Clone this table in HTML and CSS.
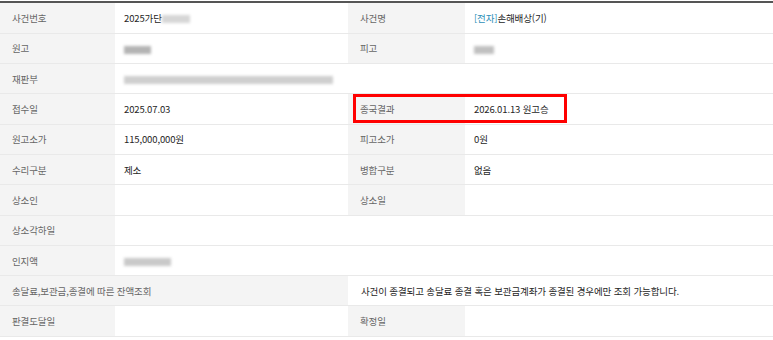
FILE: index.html
```html
<!DOCTYPE html>
<html lang="ko">
<head>
<meta charset="utf-8">
<link rel="stylesheet" href="styles.css">
</head>
<body>
<div class="wrap">
  <table class="info">
    <colgroup>
      <col class="c1"><col class="c2"><col class="c3"><col class="c4">
    </colgroup>
    <tr>
      <th>사건번호</th>
      <td>2025가단<span class="blur b-num"></span></td>
      <th>사건명</th>
      <td><span class="tag">[전자]</span>손해배상(기)</td>
    </tr>
    <tr>
      <th>원고</th>
      <td><span class="blur b-plain"></span></td>
      <th>피고</th>
      <td><span class="blur b-def"></span></td>
    </tr>
    <tr>
      <th>재판부</th>
      <td colspan="3"><span class="blur b-court"></span></td>
    </tr>
    <tr>
      <th>접수일</th>
      <td>2025.07.03</td>
      <th>종국결과</th>
      <td>2026.01.13 원고승</td>
    </tr>
    <tr>
      <th>원고소가</th>
      <td>115,000,000원</td>
      <th>피고소가</th>
      <td>0원</td>
    </tr>
    <tr>
      <th>수리구분</th>
      <td>제소</td>
      <th>병합구분</th>
      <td>없음</td>
    </tr>
    <tr>
      <th>상소인</th>
      <td></td>
      <th>상소일</th>
      <td></td>
    </tr>
    <tr>
      <th>상소각하일</th>
      <td colspan="3"></td>
    </tr>
    <tr>
      <th>인지액</th>
      <td colspan="3"><span class="blur b-fee"></span></td>
    </tr>
    <tr>
      <th colspan="2">송달료,보관금,종결에 따른 잔액조회</th>
      <td colspan="2" class="note">사건이 종결되고 송달료 종결 혹은 보관금계좌가 종결된 경우에만 조회 가능합니다.</td>
    </tr>
    <tr>
      <th>판결도달일</th>
      <td></td>
      <th>확정일</th>
      <td></td>
    </tr>
  </table>
  <div class="highlight"></div>
</div>
</body>
</html>
```

FILE: styles.css
```css
html, body {
  margin: 0;
  padding: 0;
  background: #fff;
}
body {
  font-family: "Noto Sans CJK KR", "Noto Sans", sans-serif;
  font-size: 9.5px;
  letter-spacing: -0.13px;
}
.wrap {
  position: relative;
  margin-top: 1px;
  border-top: 2px solid #555;
}
.info {
  width: 100%;
  border-collapse: collapse;
  table-layout: fixed;
}
.c1 { width: 115px; }
.c2 { width: 233px; }
.c3 { width: 117px; }
.info th, .info td {
  height: 30.3px;
  box-sizing: border-box;
  padding: 0 0 0 9px;
  border-bottom: 1px solid #e9e9e9;
  text-align: left;
  vertical-align: middle;
  white-space: nowrap;
  font-weight: normal;
}
.info th {
  background: #f4f4f4;
  color: #666;
  padding-left: 12px;
}
.info td {
  color: #262626;
}
.info td.note {
  padding-left: 13px;
}
.tag {
  color: #2f8fb8;
}
.blur {
  display: inline-block;
  vertical-align: middle;
  height: 8px;
  background: #c8c8c8;
  filter: blur(1.5px);
}
.b-num { width: 28px; background: #d6d6d6; }
.b-plain { width: 27px; background: #b4b4b4; }
.b-def { width: 20px; background: #c0c0c0; }
.b-court { width: 209px; background: #cfcfcf; }
.b-fee { width: 47px; background: #c9c9c9; }
.highlight {
  position: absolute;
  left: 353px;
  top: 91px;
  width: 214px;
  height: 29px;
  box-sizing: border-box;
  border: 3px solid #f00;
  pointer-events: none;
}
```
